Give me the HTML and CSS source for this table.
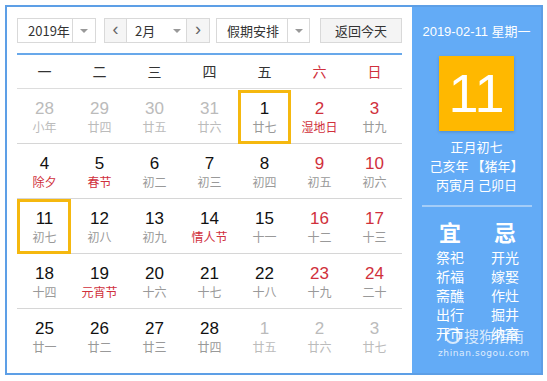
FILE: index.html
```html
<!DOCTYPE html>
<html lang="zh-CN">
<head>
<meta charset="utf-8">
<title>万年历</title>
<link rel="stylesheet" href="styles.css">
</head>
<body>
<div class="frame">
  <div class="main">
    <div class="controls">
      <div class="select year"><span class="sel-text">2019年</span><span class="sel-arrow"><i class="tri"></i></span></div>
      <div class="month-group">
        <span class="nav">&lsaquo;</span>
        <span class="month"><span class="sel-text">2月</span><i class="tri"></i></span>
        <span class="nav">&rsaquo;</span>
      </div>
      <div class="select holiday"><span class="sel-text">假期安排</span><span class="sel-arrow"><i class="tri"></i></span></div>
      <div class="today-btn">返回今天</div>
    </div>
    <div class="calendar">
      <div class="wk">一</div><div class="wk">二</div><div class="wk">三</div><div class="wk">四</div><div class="wk">五</div><div class="wk red">六</div><div class="wk red">日</div>

      <div class="day other"><b>28</b><span>小年</span></div>
      <div class="day other"><b>29</b><span>廿四</span></div>
      <div class="day other"><b>30</b><span>廿五</span></div>
      <div class="day other"><b>31</b><span>廿六</span></div>
      <div class="day sel"><b>1</b><span>廿七</span></div>
      <div class="day wkend"><b>2</b><span class="fest">湿地日</span></div>
      <div class="day wkend"><b>3</b><span>廿九</span></div>

      <div class="day"><b>4</b><span class="fest">除夕</span></div>
      <div class="day"><b>5</b><span class="fest">春节</span></div>
      <div class="day"><b>6</b><span>初二</span></div>
      <div class="day"><b>7</b><span>初三</span></div>
      <div class="day"><b>8</b><span>初四</span></div>
      <div class="day wkend"><b>9</b><span>初五</span></div>
      <div class="day wkend"><b>10</b><span>初六</span></div>

      <div class="day sel first"><b>11</b><span>初七</span></div>
      <div class="day"><b>12</b><span>初八</span></div>
      <div class="day"><b>13</b><span>初九</span></div>
      <div class="day"><b>14</b><span class="fest">情人节</span></div>
      <div class="day"><b>15</b><span>十一</span></div>
      <div class="day wkend"><b>16</b><span>十二</span></div>
      <div class="day wkend"><b>17</b><span>十三</span></div>

      <div class="day"><b>18</b><span>十四</span></div>
      <div class="day"><b>19</b><span class="fest">元宵节</span></div>
      <div class="day"><b>20</b><span>十六</span></div>
      <div class="day"><b>21</b><span>十七</span></div>
      <div class="day"><b>22</b><span>十八</span></div>
      <div class="day wkend"><b>23</b><span>十九</span></div>
      <div class="day wkend"><b>24</b><span>二十</span></div>

      <div class="day last"><b>25</b><span>廿一</span></div>
      <div class="day last"><b>26</b><span>廿二</span></div>
      <div class="day last"><b>27</b><span>廿三</span></div>
      <div class="day last"><b>28</b><span>廿四</span></div>
      <div class="day last other"><b>1</b><span>廿五</span></div>
      <div class="day last other"><b>2</b><span>廿六</span></div>
      <div class="day last other"><b>3</b><span>廿七</span></div>
    </div>
  </div>
  <div class="side">
    <div class="side-date">2019-02-11 星期一</div>
    <div class="big-day">11</div>
    <div class="lunar">
      <div>正月初七</div>
      <div>己亥年 【猪年】</div>
      <div>丙寅月 己卯日</div>
    </div>
    <div class="sep"></div>
    <div class="yiji">
      <div class="col">
        <div class="head">宜</div>
        <div>祭祀</div><div>祈福</div><div>斋醮</div><div>出行</div><div>开市</div>
      </div>
      <div class="col">
        <div class="head">忌</div>
        <div>开光</div><div>嫁娶</div><div>作灶</div><div>掘井</div><div>纳畜</div>
      </div>
    </div>
    <div class="watermark">
      <div class="wm-line"><span class="wm-icon"></span><span class="wm-text">搜狗指南</span></div>
      <div class="wm-url">zhinan.sogou.com</div>
    </div>
  </div>
</div>
</body>
</html>
```

FILE: styles.css
```css
* { box-sizing: border-box; }
html, body { margin: 0; padding: 0; background: #fff; }
body {
  font-family: "Noto Sans CJK SC", "Liberation Sans", sans-serif;
  color: #333;
}
.frame {
  margin: 5px 0 0 5px;
  width: 538px;
  height: 370px;
  border: 2px solid #5d9fe6;
  display: flex;
}
.main {
  width: 405px;
  padding: 11px 10px 0 10px;
  background: #fff;
}
.controls {
  display: flex;
  height: 25px;
  font-size: 13px;
}
.select {
  display: flex;
  border: 1px solid #d9d9d9;
  height: 25px;
  line-height: 23px;
  color: #333;
}
.sel-text { padding-left: 10px; }
.sel-arrow {
  border-left: 1px solid #d9d9d9;
  display: flex;
  align-items: center;
  justify-content: center;
}
.tri {
  display: block;
  width: 0; height: 0;
  border-left: 4px solid transparent;
  border-right: 4px solid transparent;
  border-top: 4px solid #999;
}
.year { width: 79px; }
.year .sel-text { width: 55px; }
.year .sel-arrow { width: 23px; }
.month-group {
  display: flex;
  margin-left: 8px;
  width: 106px;
  height: 25px;
  border: 1px solid #d9d9d9;
  line-height: 23px;
}
.nav {
  width: 22px;
  background: #f5f5f5;
  text-align: center;
  color: #666;
  font-family: "Liberation Sans", sans-serif;
  font-size: 18px;
  line-height: 21px;
}
.nav:last-child { width: 23px; border-left: 1px solid #d9d9d9; }
.nav:first-child { border-right: 1px solid #d9d9d9; }
.month {
  width: 59px;
  display: flex;
  align-items: center;
}
.month .sel-text { padding-left: 8px; width: 46px; }
.holiday { margin-left: 6px; width: 94px; }
.holiday .sel-text { width: 71px; }
.holiday .sel-arrow { width: 22px; }
.today-btn {
  margin-left: 10px;
  width: 82px;
  height: 25px;
  border: 1px solid #d9d9d9;
  background: #f4f4f4;
  text-align: center;
  line-height: 23px;
  color: #333;
}
.calendar {
  margin-top: 10px;
  border-top: 2px solid #68a8ea;
  display: grid;
  grid-template-columns: repeat(7, 55px);
}
.wk {
  height: 34px;
  border-bottom: 1px solid #ddd;
  text-align: center;
  line-height: 32px;
  font-size: 14px;
  color: #333;
}
.wk.red { color: #d0303c; }
.day {
  position: relative;
  height: 55px;
  border-bottom: 1px solid #d6d6d6;
  padding-top: 10px;
  text-align: center;
  display: flex;
  flex-direction: column;
  align-items: center;
}
.day.last { border-bottom: none; }
.day b {
  font-family: "Liberation Sans", sans-serif;
  font-weight: normal;
  font-size: 17px;
  line-height: 20px;
  color: #111;
}
.day span {
  font-size: 12px;
  line-height: 16px;
  color: #999;
}
.day.wkend b { color: #d0303c; }
.day span.fest { color: #d0303c; }
.day.other b { color: #bbb; }
.day.other span { color: #bbb; }
.day.sel::after {
  content: "";
  position: absolute;
  top: 1px; left: 1px; right: 1px; bottom: -1px;
  border: 3px solid #f5b80f;
}
.day.sel.first::after { left: 0; top: 0; }
.side {
  position: relative;
  width: 129px;
  background: #63abf6;
  color: #fff;
  text-align: center;
  padding-top: 16px;
  display: flex;
  flex-direction: column;
  align-items: center;
}
.side-date {
  font-size: 13px;
  line-height: 18px;
  font-family: "Liberation Sans", "Noto Sans CJK SC", sans-serif;
}
.big-day {
  margin-top: 15px;
  width: 75px;
  height: 75px;
  background: #ffb800;
  box-shadow: 0 1px 3px rgba(0,0,0,0.18);
  font-family: "Liberation Sans", sans-serif;
  font-size: 54px;
  line-height: 75px;
  color: #fff;
}
.lunar {
  margin-top: 6px;
  font-size: 13px;
  line-height: 19px;
}
.sep {
  margin-top: 11px;
  width: 110px;
  height: 2px;
  background: #a4cdf8;
}
.yiji {
  margin-top: 10px;
  margin-left: 2px;
  display: flex;
  gap: 7px;
}
.col {
  width: 48px;
  font-size: 14px;
  line-height: 19px;
}
.col .head {
  font-size: 22px;
  font-weight: bold;
  line-height: 28px;
  margin-bottom: 3px;
}
.watermark {
  position: absolute;
  left: 33px;
  top: 319px;
  color: rgba(255,255,255,0.75);
  text-align: left;
}
.wm-line { display: flex; align-items: center; }
.wm-icon {
  width: 16px; height: 16px;
  border: 2px solid rgba(255,255,255,0.75);
  border-radius: 50%;
  margin-right: 3px;
}
.wm-text { font-size: 15px; line-height: 20px; }
.wm-url {
  margin-top: 2px;
  margin-left: -7px;
  font-family: "DejaVu Sans", sans-serif;
  font-size: 9px;
  letter-spacing: 0.6px;
  color: rgba(255,255,255,0.8);
}
```
